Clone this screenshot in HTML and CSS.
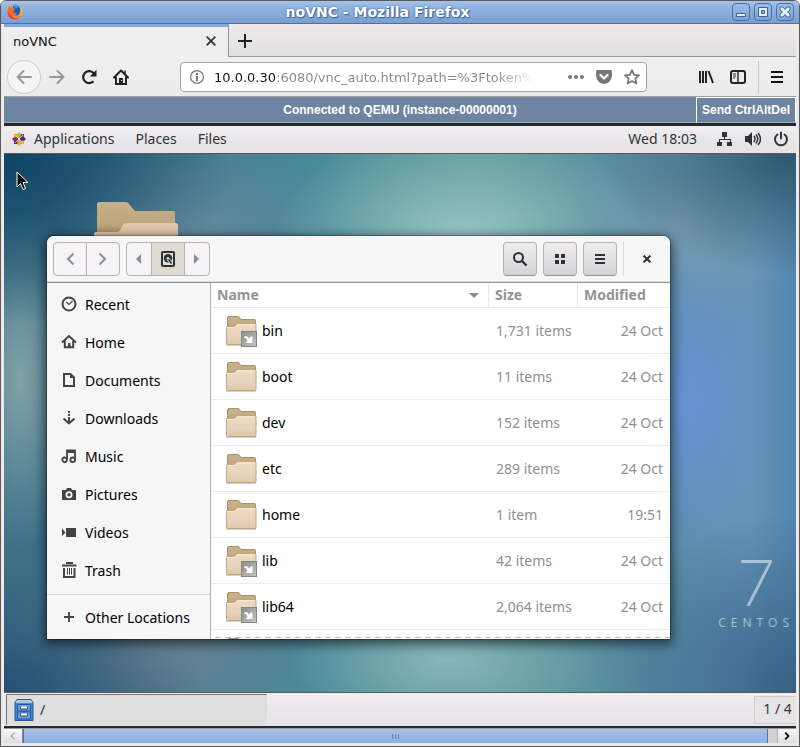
FILE: index.html
```html
<!DOCTYPE html>
<html lang="en">
<head>
<meta charset="utf-8">
<title>noVNC - Mozilla Firefox</title>
<link rel="stylesheet" href="styles.css">
</head>
<body>
<svg class="defs" aria-hidden="true">
  <defs>
    <linearGradient id="folder-front" x1="0" y1="0" x2="0" y2="1"><stop offset="0" stop-color="#ecdbbb"/><stop offset="0.6" stop-color="#e7d3bf"/><stop offset="1" stop-color="#dfc7a2"/></linearGradient>
    <linearGradient id="folder-back" x1="0" y1="0" x2="0" y2="1"><stop offset="0" stop-color="#c9b28b"/><stop offset="1" stop-color="#b39b72"/></linearGradient>
    <linearGradient id="emblem" x1="0" y1="0" x2="1" y2="1"><stop offset="0" stop-color="#8d908a"/><stop offset="1" stop-color="#c3c5bf"/></linearGradient>
    <linearGradient id="big-back" x1="0" y1="0" x2="0" y2="1"><stop offset="0" stop-color="#c8b189"/><stop offset="0.6" stop-color="#bca57b"/><stop offset="1" stop-color="#7d7055"/></linearGradient>
    <linearGradient id="fox" x1="1" y1="0" x2="0" y2="1"><stop offset="0" stop-color="#fff04a"/><stop offset="0.4" stop-color="#ff9d1e"/><stop offset="0.7" stop-color="#ff4136"/><stop offset="1" stop-color="#d6157c"/></linearGradient>
    <symbol id="folder" viewBox="0 0 32 32">
      <path d="M1 29.5h30v1.5H1z" fill="#000" opacity=".18"/>
      <path d="M2.500 28V3q0-1.500 1.500-1.500h9q1 0 1.500 1l1.500 2h13.500q1 0 1 1V28z" fill="url(#folder-back)" stroke="#a8916a"/>
      <path d="M1.500 28.500v-16q0-1 1-1h6.500q1 0 1.500-.8l1-1.400q.6-.8 1.500-.8h17q1 0 1 1v19q0 1-1 1h-27.500q-1 0-1-1z" fill="url(#folder-front)" stroke="#bda681"/>
      <path d="M2.500 13.500v-1h7q1 0 1.500-1l1-1.500h17.500" fill="none" stroke="#f8ecd9"/>
    </symbol>
    <symbol id="link" viewBox="0 0 32 32">
      <use href="#folder" width="32" height="32"/>
      <rect x="16.500" y="16.500" width="15" height="15" fill="url(#emblem)" stroke="#83867f"/>
      <path d="M19 22.500q0-1.500 2-1.500 2 0 3 2.500l2.500-2.500 1 1v6h-7l2-2.200q-.5-2.800-3.500-3.300z" fill="#fff"/>
    </symbol>
  </defs>
</svg>
<div class="browser">
  <header class="titlebar">
    <svg class="fox" viewBox="0 0 16 16"><circle cx="8" cy="8" r="7.600" fill="url(#fox)"/><path d="M8 .6a7 7 0 0 1 4 12q-4 3-8-1l2-8z" fill="#ffad20" opacity=".7"/><path d="M6 1.500q4-2 6.500 1.500 2 4-.5 7.500-3 2.500-6 0z" fill="#1b62cf"/><path d="M6 1Q9-.4 11 1.500L10.500 4 8 3.500z" fill="#20b7f0"/><path d="M1 4l1.500-2L4 4l4 .5L7 6.500 5 8l3 1.200L10 9l-1.500 2.500-4 .5L1 8z" fill="#ff6a24"/></svg>
    <h1>noVNC - Mozilla Firefox</h1>
    <div class="wm">
      <button aria-label="Minimize"><svg viewBox="0 0 16 16"><path d="M3.500 9.500h9v3h-9z"/></svg></button>
      <button aria-label="Maximize"><svg viewBox="0 0 16 16"><path d="M3.500 3.500h9v9h-9zM6.500 6.500v3h3v-3z" fill-rule="evenodd"/></svg></button>
      <button aria-label="Close"><svg viewBox="0 0 16 16"><path d="M3 3h3l2 2.500L10 3h3v3l-2.500 2L13 10v3h-3l-2-2.500L6 13H3v-3l2.500-2L3 6z"/></svg></button>
    </div>
  </header>
  <div class="tabs">
    <div class="tab"><span>noVNC</span><button class="plain" aria-label="Close tab"><svg width="10" height="10" viewBox="0 0 10 10"><path d="M.7.7l8.600 8.600M9.300.7L.7 9.300" stroke="#333" stroke-width="1.800"/></svg></button></div>
    <button class="plain newtab" aria-label="New tab"><svg width="14" height="14" viewBox="0 0 14 14"><path d="M7 0v14M0 7h14" stroke="#222" stroke-width="2"/></svg></button>
  </div>
  <nav class="toolbar">
    <button class="plain back" aria-label="Back"><svg width="16" height="16" viewBox="0 0 16 16" fill="none" stroke="#999" stroke-width="2" stroke-linecap="round" stroke-linejoin="round"><path d="M15 8H1.500M7.500 2l-6 6 6 6"/></svg></button>
    <button class="plain" aria-label="Forward"><svg width="16" height="16" viewBox="0 0 16 16" fill="none" stroke="#999" stroke-width="2" stroke-linecap="round" stroke-linejoin="round"><path d="M1 8h13.500M8.500 2l6 6-6 6"/></svg></button>
    <button class="plain" aria-label="Reload"><svg width="16" height="16" viewBox="0 0 16 16"><path d="M12.500 12.300A6 6 0 1 1 12 3.500l1 1.500" fill="none" stroke="#222" stroke-width="2.200"/><path d="M15.500 .8v6.700H8.800z" fill="#222"/></svg></button>
    <button class="plain" aria-label="Home"><svg width="16" height="16" viewBox="0 0 16 16"><path d="M1 8.500L8 1.500l7 7" fill="none" stroke="#222" stroke-width="2" stroke-linecap="round" stroke-linejoin="round"/><path d="M12 1.500v4" stroke="#222" stroke-width="1.500"/><path d="M3 7.500V15h10V7.500" fill="none" stroke="#222" stroke-width="2"/><path d="M6 9h4v6H6z" fill="#222"/><path d="M8 11h1v1H8z" fill="#eee"/></svg></button>
    <div class="urlbox">
      <svg width="14" height="14" viewBox="0 0 14 14"><circle cx="7" cy="7" r="6.400" fill="none" stroke="#777" stroke-width="1.200"/><path d="M6 6h2v5H6zM6 3h2v2H6z" fill="#777"/></svg>
      <input type="text" aria-label="Address" value="10.0.0.30:6080/vnc_auto.html?path=%3Ftoken%">
      <button class="plain" aria-label="Page actions"><svg width="16" height="4" viewBox="0 0 16 4" fill="#777"><circle cx="2" cy="2" r="2"/><circle cx="8" cy="2" r="2"/><circle cx="14" cy="2" r="2"/></svg></button>
      <button class="plain" aria-label="Save to Pocket"><svg width="16" height="14" viewBox="0 0 16 14"><path d="M1.500 0h13Q16 0 16 1.500V6q-1 7-8 8-7-1-8-8V1.500Q0 0 1.500 0z" fill="#777"/><path d="M4.500 5L8 8.500 11.500 5" fill="none" stroke="#fff" stroke-width="2.200" stroke-linecap="round" stroke-linejoin="round"/></svg></button>
      <button class="plain" aria-label="Bookmark"><svg width="16" height="16" viewBox="0 0 16 16"><path d="M8 1.200l2.100 4.600 5 .5-3.800 3.300 1.200 5L8 12l-4.500 2.600 1.200-5L.9 6.300l5-.5z" fill="none" stroke="#777" stroke-width="1.700" stroke-linejoin="round"/></svg></button>
    </div>
    <button class="plain" aria-label="Library"><svg width="16" height="14" viewBox="0 0 16 14"><path d="M2 1v12M5 1v12M8 1v12M10.500 1l4.500 12" stroke="#222" stroke-width="2"/></svg></button>
    <button class="plain" aria-label="Sidebars"><svg width="16" height="14" viewBox="0 0 16 14" fill="none" stroke="#222"><rect x="1" y="1" width="14" height="12" rx="2" stroke-width="2"/><path d="M8 1v12" stroke-width="1.400"/><path d="M3 4h3M3 6h3M3 8h2"/></svg></button>
    <span class="rule"></span>
    <button class="plain" aria-label="Menu"><svg width="12" height="12" viewBox="0 0 12 12"><path d="M0 1h12M0 6h12M0 11h12" stroke="#111" stroke-width="2"/></svg></button>
  </nav>
  <div class="status"><p>Connected to QEMU (instance-00000001)</p><button>Send CtrlAltDel</button></div>

  <main class="screen">
    <nav class="panel">
      <svg class="centos" width="14" height="14" viewBox="0 0 14 14"><path d="M4.500 2.500L7 0l2.500 2.500V5L7 7 4.500 5z" fill="#9ccd2a"/><path d="M4.500 11.500L7 14l2.500-2.500V9L7 7 4.500 9z" fill="#efa724"/><path d="M2.500 4.500L0 7l2.500 2.500H5L7 7 5 4.500z" fill="#932279"/><path d="M11.500 4.500L14 7l-2.500 2.500H9L7 7l2-2.500z" fill="#35348a"/><path d="M2 2h3.300v3.300H2z" fill="#efa724"/><path d="M8.700 2H12v3.300H8.700z" fill="#a0337d"/><path d="M2 8.700h3.300V12H2z" fill="#35348a"/><path d="M8.700 8.700H12V12H8.700z" fill="#efa724"/><path d="M3 3l8 8M11 3l-8 8" stroke="#f3eef3" stroke-width=".7"/><circle cx="7" cy="7" r="1" fill="#f3eef3"/></svg>
      <a href="#apps">Applications</a><a href="#places">Places</a><a href="#files">Files</a>
      <time>Wed 18:03</time>
      <svg width="16" height="16" viewBox="0 0 16 16" fill="#2e3436"><path d="M5 1h5v5H5zM0 11h5v4H0zM10 11h5v4h-5zM7 6h1v2h6v3h-1V9H3v2H2V8h5z"/></svg>
      <svg width="16" height="16" viewBox="0 0 16 16"><path d="M0 5h3l4-4v14l-4-4H0z" fill="#2e3436"/><path d="M9 5q2 3 0 6M11 3.500q3.500 4.500 0 9M13 2q5 6 0 12" fill="none" stroke="#2e3436" stroke-width="1.500"/></svg>
      <svg width="16" height="16" viewBox="0 0 16 16" fill="none" stroke="#2e3436" stroke-width="2" stroke-linecap="round"><path d="M4.500 3.500a6 6 0 1 0 7 0M8 1.500v6"/></svg>
    </nav>

    <div class="desktop">
      <svg class="bigfolder" width="84" height="40" viewBox="0 0 84 40"><path d="M3 40V2q0-2 2-2h26q3 0 4 2l6 7h38q2 0 2 2v29z" fill="url(#big-back)"/><path d="M0 40V32q0-2 2-2h20q3 0 4-2l3-5q1-2 3-2h50q2 0 2 2v17z" fill="#e0c9ab"/></svg>
      <svg class="pointer" width="13" height="20" viewBox="0 0 13 20"><path d="M1 1v15l3.500-3.500L7 18.500l2.500-1-2.500-6h5z" fill="#000" stroke="#fff" stroke-linejoin="round"/></svg>
      <div class="brand"><span class="seven">7</span><span class="word">CENTOS</span></div>

      <section class="window">
        <header class="head">
          <div class="group"><button aria-label="Back"><svg width="16" height="16" viewBox="0 0 16 16"><path d="M11.500 2.500L6 8l5.500 5.500" fill="none" stroke="#8b8e8f" stroke-width="2"/></svg></button><button aria-label="Forward"><svg width="16" height="16" viewBox="0 0 16 16"><path d="M4.500 2.500L10 8l-5.500 5.500" fill="none" stroke="#8b8e8f" stroke-width="2"/></svg></button></div>
          <div class="group path"><button aria-label="Earlier folders"><svg width="6" height="10" viewBox="0 0 6 10"><path d="M5 0v10L0 5z" fill="#8b8e8f"/></svg></button><button class="on" aria-label="Computer"><svg width="16" height="16" viewBox="0 0 16 16"><rect x="2" y="1" width="12" height="14" rx="1" fill="#dedbd5" stroke="#2e3436" stroke-width="2"/><circle cx="8" cy="7.200" r="4.200" fill="#2e3436"/><circle cx="8" cy="7.200" r="1.300" fill="#dedbd5"/><path d="M8 8l4 5" stroke="#dedbd5" stroke-width="3"/><path d="M8.500 8.500l3 4" stroke="#2e3436" stroke-width="1.600"/></svg></button><button aria-label="Later folders"><svg width="6" height="10" viewBox="0 0 6 10"><path d="M0 0v10L5 5z" fill="#8b8e8f"/></svg></button></div>
          <span class="fill"></span>
          <button class="tool" aria-label="Search"><svg width="16" height="16" viewBox="0 0 16 16"><circle cx="6.500" cy="6.500" r="4.500" fill="none" stroke="#2e3436" stroke-width="2"/><path d="M10 10l4.500 4.500" stroke="#2e3436" stroke-width="2.400"/></svg></button>
          <button class="tool" aria-label="Grid view"><svg width="16" height="16" viewBox="0 0 16 16" fill="#2e3436"><path d="M3 3h4v4H3zM9 3h4v4H9zM3 9h4v4H3zM9 9h4v4H9z"/></svg></button>
          <button class="tool" aria-label="Menu"><svg width="16" height="16" viewBox="0 0 16 16"><path d="M3 4h10M3 8h10M3 12h10" stroke="#2e3436" stroke-width="2"/></svg></button>
          <span class="sep"></span>
          <button class="plain shut" aria-label="Close"><svg width="8" height="8" viewBox="0 0 8 8"><path d="M.6.6l6.800 6.800M7.400.6L.6 7.400" stroke="#2e3436" stroke-width="2"/></svg></button>
        </header>
        <div class="body">
          <nav class="side">
            <a href="#r"><svg viewBox="0 0 16 16"><circle cx="8" cy="8" r="6.500" fill="none" stroke="#444" stroke-width="2"/><path d="M5 6l3 2.500 3.500-3.500" fill="none" stroke="#444" stroke-width="1.200"/></svg>Recent</a>
            <a href="#h"><svg viewBox="0 0 16 16"><path d="M1 8.500L8 2l7 6.500" fill="none" stroke="#444" stroke-width="2"/><path d="M3.800 7v6.200h8.400V7" fill="none" stroke="#444" stroke-width="2"/><path d="M7 9h2.500v5H7z" fill="#444"/></svg>Home</a>
            <a href="#d"><svg viewBox="0 0 16 16"><path d="M3 2h6.500L13 5.500V14H3z" fill="none" stroke="#444" stroke-width="2"/><path d="M9 2v4h4z" fill="#444"/></svg>Documents</a>
            <a href="#dl"><svg viewBox="0 0 16 16"><path d="M7 1h2v2H7zM7 4h2v2H7zM7 7h2v5H7z" fill="#444"/><path d="M2.500 8.500L8 13.500l5.500-5" fill="none" stroke="#444" stroke-width="2"/></svg>Downloads</a>
            <a href="#m"><svg viewBox="0 0 16 16"><path d="M6 11.500V2.500h8v9" fill="none" stroke="#444" stroke-width="1.800"/><path d="M6 2h8v3H6z" fill="#444"/><circle cx="3.600" cy="11.800" r="2.300" fill="none" stroke="#444" stroke-width="1.800"/><circle cx="11.700" cy="11.800" r="2.300" fill="none" stroke="#444" stroke-width="1.800"/></svg>Music</a>
            <a href="#p"><svg viewBox="0 0 16 16"><path d="M1 4h4l1-2h4l1 2h4v10H1z" fill="#444"/><circle cx="8" cy="8.700" r="2.600" fill="none" stroke="#f6f6f6" stroke-width="1.800"/></svg>Pictures</a>
            <a href="#v"><svg viewBox="0 0 16 16"><path d="M5 4h10v9H5zM1 4.500L4.500 8.500 1 12z" fill="#444"/></svg>Videos</a>
            <a href="#t"><svg viewBox="0 0 16 16"><path d="M3 6v9h10.500V6" fill="none" stroke="#444" stroke-width="2"/><path d="M1 3.500h14.500M5 1h7" stroke="#444" stroke-width="1.800"/><path d="M6.500 6v6.500M8.500 6v6.500M10.500 6v6.500" stroke="#444"/></svg>Trash</a>
            <hr>
            <a href="#o"><svg viewBox="0 0 16 16"><path d="M8 3v10M3 8h10" stroke="#444" stroke-width="1.800"/></svg>Other Locations</a>
          </nav>
          <div class="files">
            <table>
              <thead><tr><th class="name"><span>Name<i></i></span></th><th class="size">Size</th><th class="date">Modified</th></tr></thead>
              <tbody>
                <tr><td><svg><use href="#link"/></svg>bin</td><td>1,731 items</td><td>24 Oct</td></tr>
                <tr><td><svg><use href="#folder"/></svg>boot</td><td>11 items</td><td>24 Oct</td></tr>
                <tr><td><svg><use href="#folder"/></svg>dev</td><td>152 items</td><td>24 Oct</td></tr>
                <tr><td><svg><use href="#folder"/></svg>etc</td><td>289 items</td><td>24 Oct</td></tr>
                <tr><td><svg><use href="#folder"/></svg>home</td><td>1 item</td><td>19:51</td></tr>
                <tr><td><svg><use href="#link"/></svg>lib</td><td>42 items</td><td>24 Oct</td></tr>
                <tr><td><svg><use href="#link"/></svg>lib64</td><td>2,064 items</td><td>24 Oct</td></tr>
                <tr><td><svg><use href="#folder"/></svg></td><td></td><td></td></tr>
              </tbody>
            </table>
          </div>
        </div>
      </section>
    </div>

    <footer class="taskbar">
      <button class="task"><svg width="20" height="22" viewBox="0 0 20 22"><path d="M3 .5h14l2 3v18H1v-18z" fill="#4a86d0" stroke="#2459a4"/><path d="M3 1h14l1.500 3h-17z" fill="#a9c9ef"/><path d="M3.500 5.500h13v6.500h-13zM3.500 13h13v7h-13z" fill="#6ba0e0" stroke="#2459a4"/><path d="M6.500 7.500v2.500h7V7.500M6.500 14.500V17h7v-2.500" fill="#fff" stroke="#444"/></svg>/</button>
      <button class="pager">1 / 4</button>
    </footer>
  </main>
  <div class="scroll">
    <button aria-label="Scroll left"><svg width="6" height="8" viewBox="0 0 6 8"><path d="M4.500.7L1.200 4l3.300 3.300" fill="none" stroke="#aaa" stroke-width="1.500"/></svg></button>
    <div class="thumb"><i></i><i></i><i></i></div>
    <button class="right" aria-label="Scroll right"><svg width="6" height="8" viewBox="0 0 6 8"><path d="M1.200.7L4.500 4 1.200 7.300" fill="none" stroke="#111" stroke-width="1.800"/></svg></button>
  </div>
</div>
</body>
</html>
```
FILE: styles.css
```css
* { box-sizing: border-box; }
body { margin: 0; font: 13px "DejaVu Sans", sans-serif; background: #fff; }
.defs { position: absolute; width: 0; height: 0; }
button { font: inherit; margin: 0; }
svg { display: block; flex: none; }
a { color: inherit; text-decoration: none; }
.plain { display: flex; padding: 0; border: 0; background: none; }

.browser { display: flex; flex-direction: column; min-height: 100vh; border: 1px solid #5a5a5a; border-radius: 6px 6px 0 0; background: #eceae8; padding: 0 3px 3px; }

.titlebar { display: flex; align-items: center; height: 23px; margin: 0 -3px; padding: 0 5px 0 6px; border-bottom: 1px solid #4a72a8; border-radius: 5px 5px 0 0; background: linear-gradient(#a7c4ea, #93b5e2 25%, #7a9fd0); }
.fox { width: 16px; height: 16px; }
h1 { flex: 1; margin: 0; text-align: center; font-size: 14px; line-height: 20px; color: #fff; text-shadow: 0 0 2px #3a62a0, 1px 1px 1px #3a62a0; }
.wm { display: flex; gap: 4px; }
.wm button { width: 18px; height: 18px; padding: 0; border: 1px solid #47709f; border-radius: 4px; background: linear-gradient(#9dbde6, #7ea3d4); }
.wm svg { width: 16px; height: 16px; fill: #e7effa; stroke: #3c659b; stroke-width: 1; }

.tabs { display: flex; height: 33px; background: linear-gradient(#ecebea, #e1e0df); box-shadow: inset 0 -1px #999890; }
.tab { display: flex; align-items: center; justify-content: space-between; width: 225px; padding: 0 12px 2px 9px; border-top: 3px solid #83a8da; border-right: 1px solid #999890; background: #eee; color: #111; }
.newtab { align-items: center; padding: 0 9px; }

.toolbar { display: flex; align-items: center; height: 40px; padding: 0 13px 0 3px; gap: 16px; background: linear-gradient(#efefef, #ebebeb); box-shadow: inset 0 -1px #a29f9b; }
.back { align-items: center; justify-content: center; width: 34px; height: 34px; margin-right: -8px; border: 1px solid #ccc; border-radius: 50%; background: #f5f5f5; }
.urlbox { display: flex; flex: 1; align-items: center; gap: 12px; height: 30px; margin: 0 35px; padding: 0 6px 0 9px; border: 1px solid #a5a49b; border-radius: 4px; background: #fff; }
.urlbox input { flex: 1; min-width: 0; margin: 0 24px 0 -2px; padding: 0; border: 0; font: inherit; color: transparent; background: linear-gradient(90deg, #111 61px, #888 61px, #888 280px, #fff 322px); -webkit-background-clip: text; background-clip: text; }
.rule { width: 1px; height: 33px; margin: 0 -4px; background: #c8c8c8; }

.status { display: flex; align-items: stretch; height: 26px; background: #6e84a3; color: #fff; font: bold 12px "Liberation Sans", sans-serif; box-shadow: inset 0 -1px #a5a5a5; }
.status p { flex: 1; margin: 0 0 0 100px; line-height: 26px; text-align: center; }
.status button { width: 100px; padding: 0; border: 1px solid #fff; border-bottom-color: #a5a5a5; background: none; color: #fff; }

.screen { display: flex; flex: 1; flex-direction: column; border-top: 3px solid #26292b; border-bottom: 2px solid #26292b; font: 14px "Noto Sans", sans-serif; color: #2e3436; }
.panel { display: flex; align-items: center; height: 27px; padding: 0 7px 2px 8px; gap: 12px; background: linear-gradient(#f2eef2, #e7e5e7 60%, #e6e2e6); }
.panel a { margin-right: 9px; }
.panel .centos { margin-right: -4px; }
.panel time { margin-left: auto; margin-right: 8px; }

.desktop { position: relative; flex: 1; overflow: hidden; border-top: 1px solid #5d5a55; border-bottom: 1px solid #5d5a55;
  background:
    radial-gradient(ellipse 230px 170px at 0 0, #0d4363, #0d436300),
    radial-gradient(ellipse 200px 130px at 0 100%, #255173, #25517300),
    radial-gradient(ellipse 200px 120px at 100% 0, #2c586f, #2c586f00),
    radial-gradient(ellipse 200px 180px at 100% 100%, #356184, #35618400),
    radial-gradient(ellipse 90px 160px at 86% 46%, #6892d2, #6892d200),
    radial-gradient(ellipse 110px 110px at 86% 13%, #789cb0, #789cb000),
    radial-gradient(ellipse 190px 120px at 58% 16%, #98c6c4, #98c6c400),
    radial-gradient(ellipse 160px 80px at 56% 94%, #88b6ba, #88b6ba00),
    radial-gradient(ellipse 150px 100px at 23% 15%, #668ba0, #668ba000),
    radial-gradient(ellipse 170px 100px at 19% 92%, #6c8494, #6c849400),
    radial-gradient(ellipse 60px 170px at 2% 42%, #81a3a8, #81a3a800),
    linear-gradient(90deg, #3d7088, #3f7288 15%, #47879a 36%, #589896 60%, #578ca4 82%, #6494b8 94%, #5586ae); }
.bigfolder { position: absolute; left: 90px; top: 48px; }
.pointer { position: absolute; left: 12px; top: 17px; }
.brand { position: absolute; right: 2px; bottom: 61px; display: flex; flex-direction: column; align-items: center; color: #ffffff80; }
.seven { font: 300 65px/68px Lato, sans-serif; }
.word { font-size: 12px; line-height: 16px; letter-spacing: 5px; }

.window { position: absolute; left: 43px; top: 82px; right: 126px; border-radius: 7px 7px 0 0; background: #fff; overflow: hidden; box-shadow: 0 0 0 1px #0004, 0 3px 12px 2px #0009; color: #000; }
.head { display: flex; align-items: center; height: 47px; padding: 0 8px 0 6px; border-bottom: 1px solid #96918b; background: #f6f6f6; box-shadow: inset 0 -1px #ddd; }
.head button { display: flex; align-items: center; justify-content: center; padding: 0; }
.group { display: flex; height: 34px; margin-right: 6px; border: 1px solid #b3b2b0; border-radius: 4px; background: #f6f3f6; overflow: hidden; }
.group button { width: 32px; border: 0; background: none; }
.group button + button { width: 33px; border-left: 1px solid #b3b2b0; }
.path button, .path button + button { width: 24px; }
.path button + button { width: 25px; }
.path .on.on { width: 33px; background: #dedbd5; }
.fill { flex: 1; }
.tool { width: 34px; height: 34px; margin-right: 6px; border: 1px solid #b3b2b0; border-bottom-color: #96918b; border-radius: 4px; background: linear-gradient(#efedef, #d6d3d6); }
.sep { width: 1px; height: 34px; background: #dcdcdc; }
.shut { width: 30px; height: 30px; margin-left: 8px; }

.body { display: flex; }
.side { flex: none; width: 164px; padding: 2px 0 3px; border-right: 1px solid #b3b2b0; background: #f6f6f6; }
.side a { display: flex; align-items: center; gap: 8px; height: 38px; padding-left: 14px; }
.side svg { width: 16px; height: 16px; }
.side hr { height: 1px; margin: 5px 0 3px; border: 0; background: #d8d6d4; }
.files { position: relative; flex: 1; height: 356px; overflow: hidden; }
.files::after { content: ""; position: absolute; left: 4px; right: 0; bottom: 1px; height: 1px; background: repeating-linear-gradient(90deg, #bbb 0 6px, #fff 6px 10px); }
table { width: 100%; border-collapse: separate; border-spacing: 0; table-layout: fixed; }
th { height: 25px; padding: 0 6px; border-bottom: 1px solid #e8e8e6; text-align: left; color: #929595; line-height: 20px; }
th + th { border-left: 1px solid #e8e8e6; }
.size { width: 89px; }
.date { width: 93px; }
th span { display: flex; align-items: center; justify-content: space-between; }
th i { margin-right: 3px; border: 5px solid transparent; border-top-color: #8b8e8f; border-bottom: 0; }
td { height: 46px; padding: 0 7px 0 8px; border-bottom: 1px solid #ececea; color: #8e9192; white-space: nowrap; }
td:first-child { display: flex; align-items: center; gap: 5px; padding-left: 14px; color: #000; }
td:last-child { text-align: right; }
td svg { width: 32px; height: 32px; }

.taskbar { display: flex; align-items: center; justify-content: space-between; height: 33px; padding-left: 2px; background: linear-gradient(#f0ecf0, #e6e4e6); }
.task { display: flex; align-items: center; gap: 6px; width: 261px; height: 31px; padding: 0 7px; border: 1px solid; border-color: #77777a #ddd #ddd #77777a; background: #dedede; color: #2e3436; }
.pager { height: 28px; width: 42px; padding: 0 2px 2px 6px; border: 1px solid #cfcdcf; border-right: 0; background: #e6e4e6; color: #2e3436; white-space: nowrap; }

.scroll { display: flex; height: 15px; background: #d4d2d0; border-top: 1px solid #999; }
.scroll button { display: flex; align-items: center; justify-content: center; width: 19px; padding: 0; border: 0; border-right: 1px solid #888; background: linear-gradient(#fafafa, #ddd); }
.scroll .right { margin-left: 9px; border: 0; border-left: 1px solid #aaa; }
.thumb { display: flex; flex: 1; align-items: center; justify-content: center; gap: 2px; border: solid #4a79b8; border-width: 0 1px; background: linear-gradient(#a4c0e6, #8eb0df); }
.thumb i { width: 1px; height: 5px; background: #5c82b5; }
```
